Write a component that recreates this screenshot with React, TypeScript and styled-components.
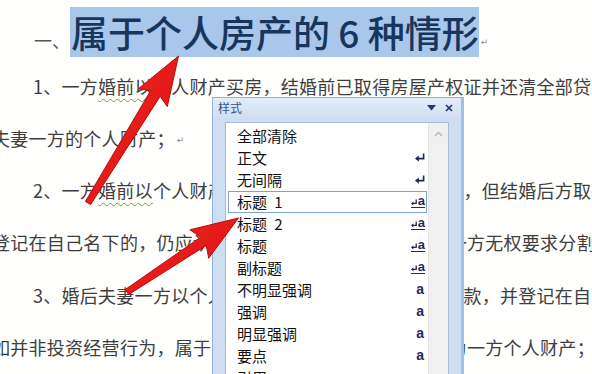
import React from "react";
import styled, { createGlobalStyle } from "styled-components";

const GlobalStyle = createGlobalStyle`
  html, body { margin: 0; padding: 0; background: #fffffd; }
  body { overflow: hidden; }
`;

const CJK = `"Noto Sans CJK SC", "Noto Sans", sans-serif`;

const Page = styled.div`
  position: relative;
  width: 592px;
  height: 374px;
  overflow: hidden;
  background: #fffffd;
  font-family: ${CJK};
`;

const Doc = styled.div`
  margin-left: -8px;
  width: 780px;
  padding-top: 7px;
`;

const HeadingLine = styled.div`
  height: 50px;
  padding-left: 42px;
  font-size: 18px;
  line-height: 50px;
  white-space: nowrap;
  color: #555;
`;

const Highlight = styled.span`
  display: inline-block;
  height: 50px;
  line-height: 50px;
  padding-left: 1px;
  background: #a9c7ea;
  color: #17365d;
  font-size: 37px;
  font-weight: 500;
`;

const Mark = styled.span`
  font-family: "DejaVu Sans", sans-serif;
  font-size: 9px;
  color: #8c8c8c;
  vertical-align: 3px;
  margin-left: 2px;
`;

const Body = styled.div`
  padding-top: 2.5px;
`;

const Line = styled.div<{ $indent?: boolean }>`
  height: 52.3px;
  line-height: 52.3px;
  padding-left: ${(p) => (p.$indent ? 41 : 0)}px;
  font-size: 18px;
  letter-spacing: 0.27px;
  color: #3e3e3e;
  white-space: nowrap;
`;

const Squiggle = styled.span`
  text-decoration: underline wavy #6f9c3c;
  text-decoration-thickness: 1px;
  text-underline-offset: 4px;
`;

/* ---------- Styles pane ---------- */

const Pane = styled.div`
  position: absolute;
  left: 212px;
  top: 97px;
  width: 252px;
  height: 300px;
  box-sizing: border-box;
  display: flex;
  flex-direction: column;
  background: #cedef2;
  border: 1px solid #93b2dc;
  border-right: 3px solid #a2bfe5;
`;

const TitleBar = styled.div`
  height: 19px;
  flex: none;
  display: flex;
  align-items: center;
  justify-content: space-between;
  padding: 0 8px 0 5px;
  background: linear-gradient(#e3ecf8, #d2e0f3);
`;

const Title = styled.span`
  font-size: 12px;
  color: #33568a;
  line-height: 19px;
`;

const Controls = styled.div`
  display: flex;
  align-items: center;
  gap: 9px;
`;

const ListBox = styled.div`
  margin: 5px 12px 0 12px;
  flex: 1;
  display: flex;
  background: #fff;
  border: 1px solid #a6bbd6;
  border-bottom: none;
`;

const Rows = styled.div`
  flex: 1;
  padding-top: 1.5px;
`;

const Row = styled.div<{ $selected?: boolean }>`
  height: 22px;
  box-sizing: border-box;
  margin: 0 1px 0 2px;
  padding: 0 1px 0 8px;
  display: flex;
  align-items: center;
  justify-content: space-between;
  border: 1.5px solid ${(p) => (p.$selected ? "#7da3d1" : "transparent")};
  font-size: 15px;
  line-height: 19px;
  color: #111;
  word-spacing: 4px;
`;

const Linked = styled.span`
  display: inline-flex;
  align-items: flex-end;
  height: 11px;
  padding-bottom: 0.5px;
  border-bottom: 1.5px solid #1d2a62;
  font-family: "Liberation Sans", Arial, sans-serif;
  font-weight: 700;
  font-size: 13px;
  line-height: 11px;
  color: #1d2a62;
`;

const CharIcon = styled.span`
  font-family: "Liberation Sans", Arial, sans-serif;
  font-weight: 700;
  font-size: 14px;
  color: #1e2a5e;
  margin-right: 1px;
`;

const ScrollTrack = styled.div`
  width: 20px;
  flex: none;
  background: #f0f0f0;
  border-left: 1px solid #e6e6e6;
  display: flex;
  justify-content: center;
  padding-top: 8px;
  box-sizing: border-box;
`;

const Overlay = styled.svg`
  position: absolute;
  left: 0;
  top: 0;
  pointer-events: none;
`;

const ReturnIcon = () => (
  <svg width="10" height="9" viewBox="0 0 10 9">
    <path d="M8.6 0.5 V5.6 H3" stroke="#1b2a4e" strokeWidth="1.6" fill="none" />
    <polygon points="0,5.6 3.8,2.4 3.8,8.8" fill="#1b2a4e" />
  </svg>
);

const MiniReturn = () => (
  <svg width="6" height="7" viewBox="0 0 6 7" style={{ marginRight: 0.5, marginBottom: 0.5 }}>
    <path d="M5.2 0.5 V4.4 H2" stroke="#1d2a62" strokeWidth="1.3" fill="none" />
    <polygon points="0,4.4 2.4,2.2 2.4,6.6" fill="#1d2a62" />
  </svg>
);

const LinkedIcon = () => (
  <Linked>
    <MiniReturn />a
  </Linked>
);

type Icon = "none" | "para" | "linked" | "char";

const styles: { name: string; icon: Icon; selected?: boolean }[] = [
  { name: "全部清除", icon: "none" },
  { name: "正文", icon: "para" },
  { name: "无间隔", icon: "para" },
  { name: "标题 1", icon: "linked", selected: true },
  { name: "标题 2", icon: "linked" },
  { name: "标题", icon: "linked" },
  { name: "副标题", icon: "linked" },
  { name: "不明显强调", icon: "char" },
  { name: "强调", icon: "char" },
  { name: "明显强调", icon: "char" },
  { name: "要点", icon: "char" },
  { name: "引用", icon: "linked" },
];

type P = [number, number];

function arrowPath(tail: P, tip: P, headLen: number, headHalf: number, wTail: number, wHead: number, notch: number) {
  const dx = tip[0] - tail[0];
  const dy = tip[1] - tail[1];
  const len = Math.hypot(dx, dy);
  const d: P = [dx / len, dy / len];
  const n: P = [-d[1], d[0]];
  const base: P = [tip[0] - d[0] * headLen, tip[1] - d[1] * headLen];
  const wingBase: P = [base[0] - d[0] * notch, base[1] - d[1] * notch];
  const pts: P[] = [
    [tail[0] + (n[0] * wTail) / 2, tail[1] + (n[1] * wTail) / 2],
    [base[0] + (n[0] * wHead) / 2, base[1] + (n[1] * wHead) / 2],
    [wingBase[0] + n[0] * headHalf, wingBase[1] + n[1] * headHalf],
    tip,
    [wingBase[0] - n[0] * headHalf, wingBase[1] - n[1] * headHalf],
    [base[0] - (n[0] * wHead) / 2, base[1] - (n[1] * wHead) / 2],
    [tail[0] - (n[0] * wTail) / 2, tail[1] - (n[1] * wTail) / 2],
  ];
  return "M" + pts.map((p) => `${p[0].toFixed(1)} ${p[1].toFixed(1)}`).join(" L") + " Z";
}

const Arrows = () => (
  <Overlay width="592" height="374" viewBox="0 0 592 374">
    <defs>
      <linearGradient id="red" x1="0" y1="0" x2="1" y2="1">
        <stop offset="0" stopColor="#f52a22" />
        <stop offset="1" stopColor="#d80d10" />
      </linearGradient>
    </defs>
    <path
      d={arrowPath([88, 203], [178.5, 56], 44, 17, 6, 11, 5)}
      fill="url(#red)"
      stroke="#b80c0e"
      strokeWidth="1"
      strokeLinejoin="round"
    />
    <path
      d={arrowPath([127, 292], [238.5, 218], 42, 17, 6, 10, 5)}
      fill="url(#red)"
      stroke="#b80c0e"
      strokeWidth="1"
      strokeLinejoin="round"
    />
  </Overlay>
);

export default function App() {
  return (
    <Page>
      <GlobalStyle />
      <Doc>
        <HeadingLine>
          一、<Highlight>属于个人房产的 6 种情形</Highlight>
          <Mark>↵</Mark>
        </HeadingLine>
        <Body>
          <Line $indent>
            1、一方<Squiggle>婚前以</Squiggle>个人财产买房，结婚前已取得房屋产权证并还清全部贷款的
          </Line>
          <Line>
            夫妻一方的个人财产；<Mark>↵</Mark>
          </Line>
          <Line $indent>
            2、一方<Squiggle>婚前以</Squiggle>个人财产买房，并支付了全部首期房款，但结婚后方取得房产证
          </Line>
          <Line>登记在自己名下的，仍应认定为夫妻一方的个人财产，另一方无权要求分割。</Line>
          <Line $indent>3、婚后夫妻一方以个人财产购买房屋，一次性付清房款，并登记在自己名下</Line>
          <Line>如并非投资经营行为，属于夫妻个人生活消费的，应认定为一方个人财产；</Line>
        </Body>
      </Doc>

      <Pane>
        <TitleBar>
          <Title>样式</Title>
          <Controls>
            <svg width="9" height="6" viewBox="0 0 9 6">
              <polygon points="0,0 9,0 4.5,5.5" fill="#1f3b6e" />
            </svg>
            <svg width="8" height="8" viewBox="0 0 8 8">
              <path d="M1 1 L7 7 M7 1 L1 7" stroke="#1f3b6e" strokeWidth="1.7" />
            </svg>
          </Controls>
        </TitleBar>
        <ListBox>
          <Rows>
            {styles.map((s) => (
              <Row key={s.name} $selected={s.selected}>
                <span>{s.name}</span>
                {s.icon === "para" && <ReturnIcon />}
                {s.icon === "linked" && <LinkedIcon />}
                {s.icon === "char" && <CharIcon>a</CharIcon>}
              </Row>
            ))}
          </Rows>
          <ScrollTrack>
            <svg width="9" height="6" viewBox="0 0 9 6">
              <path d="M1 5 L4.5 1.3 L8 5" stroke="#b9b9b9" strokeWidth="1.6" fill="none" />
            </svg>
          </ScrollTrack>
        </ListBox>
      </Pane>

      <Arrows />
    </Page>
  );
}
